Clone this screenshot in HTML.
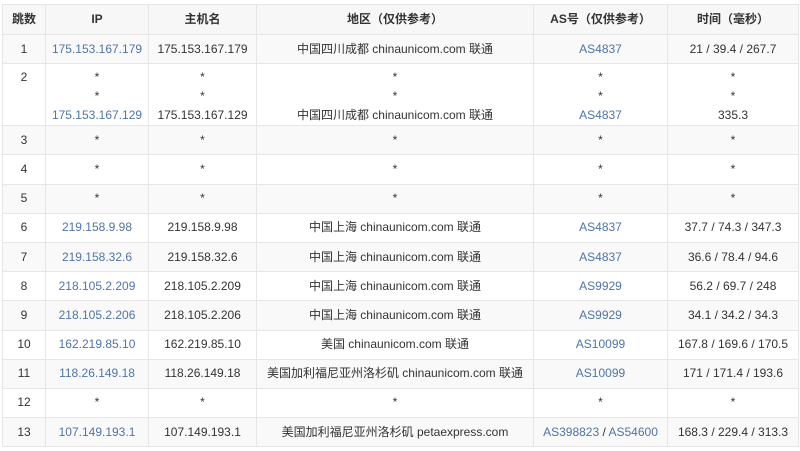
<!DOCTYPE html>
<html><head><meta charset="utf-8"><style>
html,body{margin:0;padding:0;background:#fff;width:800px;height:451px;overflow:hidden}
table{position:absolute;left:2px;top:4px;border-collapse:collapse;font-family:"Liberation Sans","Noto Sans CJK SC",sans-serif;font-size:12px;color:#333;table-layout:fixed}
td,th{border:1px solid #e6e6e6;text-align:center;padding:0;line-height:19px}
th{height:29px;background:#f7f7f7;font-weight:bold;font-size:12px}
td{height:28.2px}
tr.o td{background:#f9f9f9}
a{color:#4f74a8;text-decoration:none}
tr.t td{vertical-align:top;padding-top:4px;height:55px}
</style></head><body>
<table>
<colgroup><col style="width:43px"><col style="width:103px"><col style="width:108px"><col style="width:277px"><col style="width:134px"><col style="width:131px"></colgroup>
<tr><th>跳数</th><th>IP</th><th>主机名</th><th>地区（仅供参考）</th><th>AS号（仅供参考）</th><th>时间（毫秒）</th></tr>
<tr class="o"><td>1</td><td><a>175.153.167.179</a></td><td>175.153.167.179</td><td>中国四川成都 chinaunicom.com 联通</td><td><a>AS4837</a></td><td>21 / 39.4 / 267.7</td></tr>
<tr class="t"><td>2</td><td>*<br>*<br><a>175.153.167.129</a></td><td>*<br>*<br>175.153.167.129</td><td>*<br>*<br>中国四川成都 chinaunicom.com 联通</td><td>*<br>*<br><a>AS4837</a></td><td>*<br>*<br>335.3</td></tr>
<tr class="o"><td>3</td><td>*</td><td>*</td><td>*</td><td>*</td><td>*</td></tr>
<tr><td>4</td><td>*</td><td>*</td><td>*</td><td>*</td><td>*</td></tr>
<tr class="o"><td>5</td><td>*</td><td>*</td><td>*</td><td>*</td><td>*</td></tr>
<tr><td>6</td><td><a>219.158.9.98</a></td><td>219.158.9.98</td><td>中国上海 chinaunicom.com 联通</td><td><a>AS4837</a></td><td>37.7 / 74.3 / 347.3</td></tr>
<tr class="o"><td>7</td><td><a>219.158.32.6</a></td><td>219.158.32.6</td><td>中国上海 chinaunicom.com 联通</td><td><a>AS4837</a></td><td>36.6 / 78.4 / 94.6</td></tr>
<tr><td>8</td><td><a>218.105.2.209</a></td><td>218.105.2.209</td><td>中国上海 chinaunicom.com 联通</td><td><a>AS9929</a></td><td>56.2 / 69.7 / 248</td></tr>
<tr class="o"><td>9</td><td><a>218.105.2.206</a></td><td>218.105.2.206</td><td>中国上海 chinaunicom.com 联通</td><td><a>AS9929</a></td><td>34.1 / 34.2 / 34.3</td></tr>
<tr><td>10</td><td><a>162.219.85.10</a></td><td>162.219.85.10</td><td>美国 chinaunicom.com 联通</td><td><a>AS10099</a></td><td>167.8 / 169.6 / 170.5</td></tr>
<tr class="o"><td>11</td><td><a>118.26.149.18</a></td><td>118.26.149.18</td><td>美国加利福尼亚州洛杉矶 chinaunicom.com 联通</td><td><a>AS10099</a></td><td>171 / 171.4 / 193.6</td></tr>
<tr><td>12</td><td>*</td><td>*</td><td>*</td><td>*</td><td>*</td></tr>
<tr class="o"><td>13</td><td><a>107.149.193.1</a></td><td>107.149.193.1</td><td>美国加利福尼亚州洛杉矶 petaexpress.com</td><td><a>AS398823</a> / <a>AS54600</a></td><td>168.3 / 229.4 / 313.3</td></tr>
</table>
</body></html>
